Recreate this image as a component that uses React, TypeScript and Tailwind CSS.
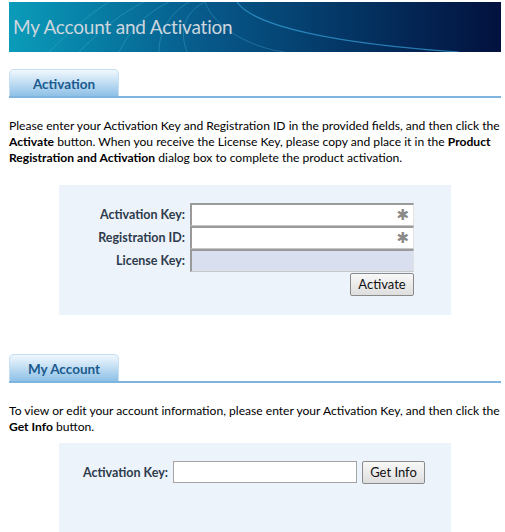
import React from 'react'

const font = { fontFamily: 'Lato, "Open Sans", sans-serif' }

function Banner() {
  return (
    <div className="relative h-[50px] w-[492px] overflow-hidden bg-gradient-to-r from-[#0b9cba] via-[#07598a] via-40% to-[#03113e]">
      <svg className="absolute inset-0" width="492" height="50" viewBox="0 0 492 50" fill="none">
        {/* decorative arcs */}
        <g stroke="#4fc3e6" strokeOpacity="0.3" strokeWidth="1">
          <path d="M40 50 C 60 30, 80 12, 100 0" />
          <path d="M70 50 C 90 30, 110 12, 135 0" />
          <path d="M110 50 C 120 30, 135 12, 160 0" />
          <path d="M150 50 C 150 30, 160 12, 180 0" />
          <path d="M178 50 C 170 30, 175 10, 196 0" />
        </g>
        <path d="M228 0 C 245 25, 330 42, 450 50" stroke="#3aa7e0" strokeOpacity="0.65" strokeWidth="1.2" />
        <path d="M196 0 C 205 25, 240 45, 275 50" stroke="#4fc3e6" strokeOpacity="0.3" strokeWidth="1" />
      </svg>
      <div className="relative pl-[4px] pt-[13px] text-[19px] leading-[24px] tracking-[-0.2px] text-[#cdd6de]" style={font}>
        My Account and Activation
      </div>
    </div>
  )
}

function Tab({ title }: { title: string }) {
  return (
    <div className="flex h-[28px] w-[492px] items-end border-b-2 border-[#7fb4de]">
      <div className="flex h-[27px] w-[110px] items-center justify-center rounded-t-[5px] border border-b-0 border-[#c4dff2] bg-gradient-to-b from-[#f1f8fd] to-[#8ec1e7] pt-[3px] text-[13.5px] font-bold text-[#1b5a8e]">
        {title}
      </div>
    </div>
  )
}

function TextInput({ required, disabled }: { required?: boolean; disabled?: boolean }) {
  return (
    <div
      className={`relative h-[23px] w-[224px] border border-t-2 border-l-2 border-t-[#9a9a9a] border-l-[#9a9a9a] border-r-[#e2e2e2] border-b-[#c8c8c8] ${
        disabled ? 'bg-[#dadfef]' : 'bg-white'
      }`}
    >
      {required && (
        <span className="absolute right-[4px] top-[1px] text-[15px] leading-[18px] font-bold text-[#8a8a8a]" style={{ fontFamily: '"DejaVu Sans", sans-serif' }}>
          ✱
        </span>
      )}
    </div>
  )
}

function Button({ label, w }: { label: string; w: string }) {
  return (
    <button className={`h-[23px] ${w} rounded-[2px] border border-[#8a8a8a] bg-gradient-to-b from-[#f8f8f8] to-[#dedede] text-[13px] font-normal text-[#111]`}>
      {label}
    </button>
  )
}

export default function App() {
  return (
    <div className="min-h-[532px] bg-white pl-[9px] pt-[2px] text-[12px] text-black" style={font}>
      <Banner />

      {/* Activation */}
      <div className="mt-[18px]">
        <Tab title="Activation" />
      </div>
      <p className="mt-[20px] w-[494px] text-[12.1px] leading-[16px]">
        Please enter your Activation Key and Registration ID in the provided fields, and then click the <b>Activate</b> button. When you receive the License Key, please copy and place it in the <b>Product Registration and Activation</b> dialog box to complete the product activation.
      </p>
      <div className="ml-[50px] mt-[19px] h-[130px] w-[392px] bg-[#edf3fa] pt-[18px]">
        <div className="grid grid-cols-[126px_224px] items-center gap-x-[5px] text-[12.5px] font-bold text-[#2d3b4c]">
          <span className="pt-[1px] text-right">Activation Key:</span>
          <TextInput required />
          <span className="pt-[1px] text-right">Registration ID:</span>
          <TextInput required />
          <span className="pt-[1px] text-right">License Key:</span>
          <TextInput disabled />
          <span />
          <div className="flex justify-end pt-[1px]">
            <Button label="Activate" w="w-[64px]" />
          </div>
        </div>
      </div>

      {/* My Account */}
      <div className="mt-[40px]">
        <Tab title="My Account" />
      </div>
      <p className="mt-[20px] w-[494px] text-[12.1px] leading-[16px]">
        To view or edit your account information, please enter your Activation Key, and then click the <b>Get Info</b> button.
      </p>
      <div className="ml-[50px] mt-[8px] h-[92px] w-[392px] bg-[#edf3fa] pt-[18px]">
        <div className="flex items-start gap-[5px] pl-[24px]">
          <span className="pt-[3px] text-[12.5px] font-bold text-[#2d3b4c]">Activation Key:</span>
          <div className="h-[22px] w-[184px] border border-[#a5a5a5] bg-white" />
          <Button label="Get Info" w="w-[63px]" />
        </div>
      </div>
    </div>
  )
}
